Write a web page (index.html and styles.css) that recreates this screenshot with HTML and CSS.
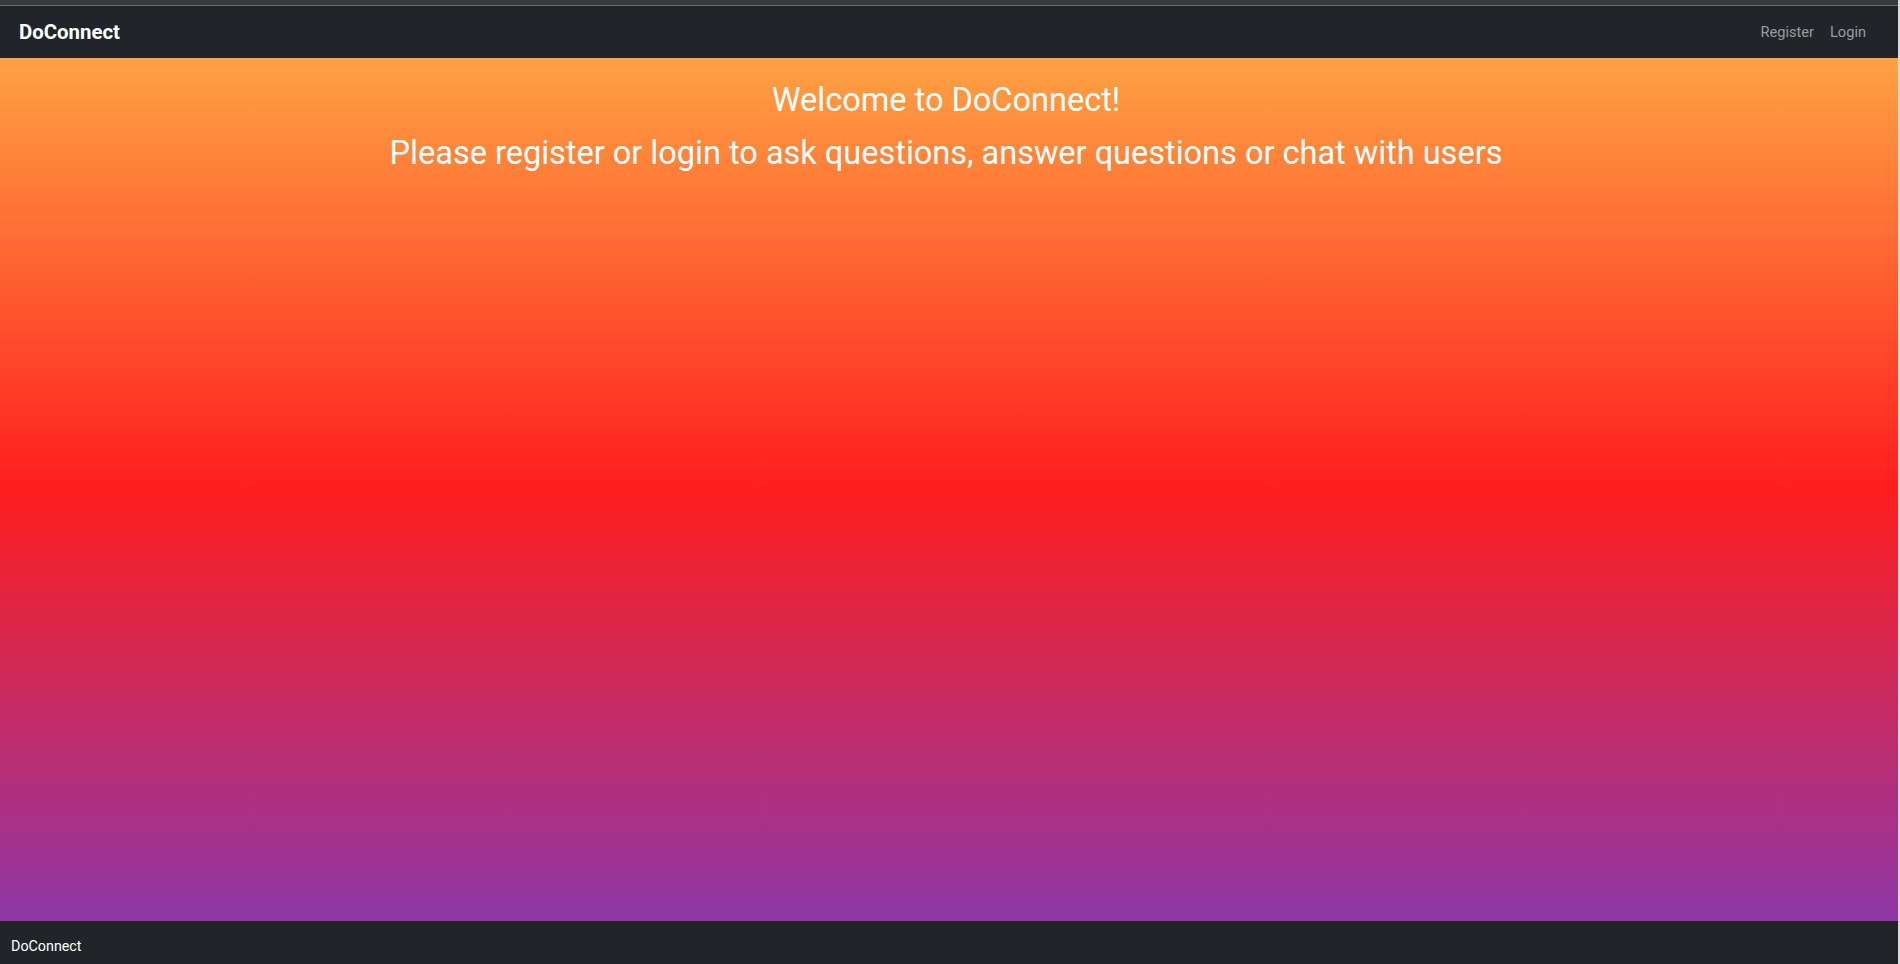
FILE: index.html
```html
<!DOCTYPE html>
<html lang="en">
<head>
<meta charset="utf-8">
<title>DoConnect</title>
<link rel="stylesheet" href="styles.css">
</head>
<body>
<div class="frame">
  <div class="page">
    <div class="chrome"></div>
    <nav class="navbar">
      <a class="brand" href="#">DoConnect</a>
      <div class="nav-links">
        <a class="nav-link" href="#">Register</a>
        <a class="nav-link" href="#">Login</a>
      </div>
    </nav>
    <main class="hero">
      <h2 class="title">Welcome to DoConnect!</h2>
      <h2 class="subtitle">Please register or login to ask questions, answer questions or chat with users</h2>
    </main>
    <footer class="footer">
      <span class="footer-brand">DoConnect</span>
    </footer>
  </div>
  <div class="edge"></div>
</div>
</body>
</html>
```

FILE: styles.css
```css
* { box-sizing: border-box; }
html, body { margin: 0; padding: 0; height: 100%; }
body {
  font-family: Roboto, "Liberation Sans", sans-serif;
  background: #212529;
  overflow: hidden;
}
.frame {
  display: flex;
  height: 964px;
}
.page {
  flex: 1;
  display: flex;
  flex-direction: column;
  min-width: 0;
}
.edge {
  width: 2px;
  background: #d9d9d9;
}
.chrome {
  height: 6px;
  background: #38393c;
  border-bottom: 1px solid #6b6c6e;
}
.navbar {
  height: 52px;
  background: #212529;
  display: flex;
  align-items: center;
  justify-content: space-between;
  padding: 0 24px 0 19px;
}
.brand {
  color: #fff;
  font-size: 20.4px;
  font-weight: 700;
  text-decoration: none;
}
.nav-links {
  display: flex;
}
.nav-link {
  color: rgba(255, 255, 255, 0.55);
  font-size: 14.6px;
  text-decoration: none;
  padding: 0 8px;
}
.hero {
  flex: 1;
  background: linear-gradient(to bottom, #ffa243 0%, #ff1e1e 50%, #8e37a6 100%);
  color: #fff;
  text-align: center;
  padding: 23px 6px 0 0;
}
.title, .subtitle {
  margin: 0;
  font-weight: 400;
  font-size: 32.5px;
  line-height: 38px;
}
.title { margin-bottom: 15px; }
.footer {
  height: 43px;
  background: #212529;
  display: flex;
  align-items: flex-start;
  padding: 17px 0 0 11px;
}
.footer-brand {
  color: #fff;
  font-size: 14.3px;
  line-height: 17px;
}
```
